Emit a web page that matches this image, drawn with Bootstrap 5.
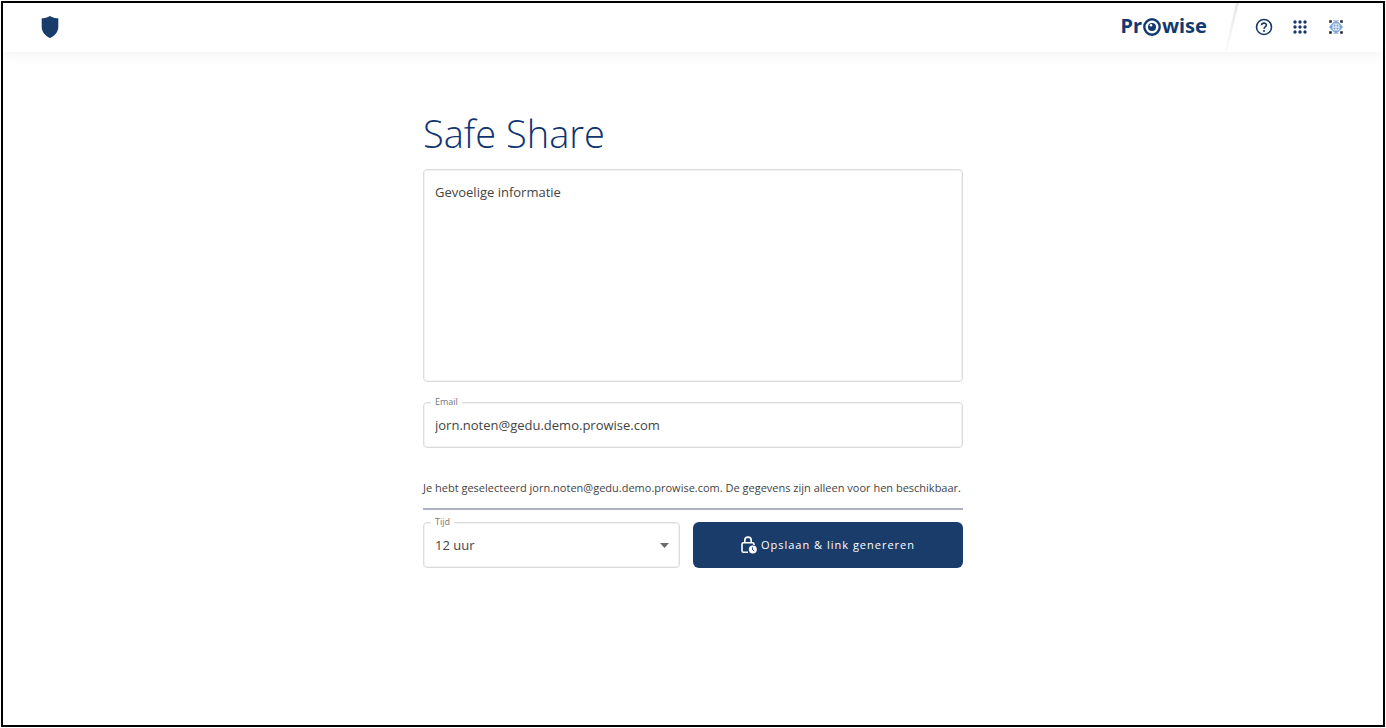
<!DOCTYPE html>
<html lang="nl">
<head>
<meta charset="utf-8">
<meta name="viewport" content="width=device-width, initial-scale=1">
<title>Safe Share</title>
<link href="https://cdn.jsdelivr.net/npm/bootstrap@5.3.0/dist/css/bootstrap.min.css" rel="stylesheet">
<style>
  :root { --navy: #1a3c6b; --ink: #444; --line: #dcdcdc; }
  body { padding: 1px; background: #fff; color: var(--ink); font-family: "Open Sans", "Noto Sans", sans-serif; font-size: 12px; line-height: 16px; }
  .frame { min-height: calc(100vh - 2px); border: 2px solid #000; }
  .topbar { height: 49px; padding: 0 38px 2px; box-shadow: 0 2px 12px rgba(0, 0, 0, .06); }
  .brand { padding-bottom: 2px; color: #123a72; font-family: "Noto Sans", sans-serif; font-size: 20px; font-weight: 700; line-height: 24px; }
  .slash { margin: 0 16px 0 18px; }
  .tool { width: 18px; height: 18px; }
  .tools { gap: 18px; }
  .sheet { max-width: 540px; padding-top: 57px; }
  h1 { margin: 0 0 12px; color: #0f3470; font-size: 38px; font-weight: 300; line-height: 48px; }
  .field .form-control, .field .form-select { border: 1px solid var(--line); outline: 1px solid #f2f2f2; outline-offset: -2px; border-radius: 4px; color: var(--ink); font-size: 13px; line-height: 20px; padding: 12px 11px; height: 46px; }
  .field textarea.form-control { height: 213px; resize: none; padding-top: 44px; }
  .field .form-select { background-image: none; }
  .inner-label { position: absolute; left: 12px; top: 13px; font-size: 13px; line-height: 20px; }
  .notch-label { position: absolute; left: 8px; top: -6px; padding: 0 4px; background: #fff; color: #757575; font-size: 9px; line-height: 12px; }
  .arrow { position: absolute; right: 11px; top: 21px; pointer-events: none; }
  .note { margin: 32px 0 12px; font-size: 11px; }
  .rule { height: 2px; margin: 0 0 12px; border: 0; background: #adb3c4; opacity: 1; }
  .pair { gap: 13px; }
  .time { flex: 257 1 0; }
  .save { flex: 270 1 0; --bs-btn-bg: #1a3c6b; --bs-btn-border-color: #1a3c6b; --bs-btn-hover-bg: #234b82; --bs-btn-padding-x: 0; --bs-btn-border-width: 0; height: 46px; border-radius: 6px; font-size: 11px; font-weight: 500; letter-spacing: 1px; gap: 4px; }
</style>
</head>
<body>
<div class="frame">
  <header class="topbar d-flex align-items-center">
    <a href="#" class="d-flex" aria-label="Home">
      <svg width="18" height="22" viewBox="0 0 18 22"><path d="M9 0C11.500 1.700 14.500 2.200 17.300 2.300V11C17.300 16 13.500 20 9 22C4.500 20 .7 16 .7 11V2.300C3.500 2.200 6.500 1.700 9 0Z" fill="#1a3c6b"/></svg>
    </a>
    <a href="#" class="brand ms-auto d-flex align-items-center text-decoration-none">Pr<svg width="20" height="20" viewBox="0 0 20 20"><circle cx="10" cy="11" r="7.700" fill="none" stroke="#123a72" stroke-width="2.400"/><circle cx="10" cy="11" r="4" fill="#123a72"/><circle cx="9" cy="9.300" r="1.300" fill="#fff"/></svg>wise</a>
    <svg class="slash" width="14" height="48" viewBox="0 0 14 48"><defs><linearGradient id="fade" x2="0" y2="1"><stop stop-color="#e6e6e6"/><stop offset="1" stop-color="#fafafa"/></linearGradient></defs><path d="M11 0H14L2 48H0Z" fill="url(#fade)"/></svg>
    <div class="tools d-flex">
      <button type="button" class="tool btn p-0 border-0 d-flex" aria-label="Help">
        <svg width="18" height="18" viewBox="0 0 18 18" fill="none" stroke="#17386b" stroke-width="1.600"><circle cx="9" cy="9" r="7.500"/><path d="M6.600 7.300C6.600 4.400 11.400 4.400 11.400 7.100C11.400 8.800 9 8.900 9 10.800"/><circle cx="9" cy="13" r="1" fill="#17386b" stroke="none"/></svg>
      </button>
      <button type="button" class="tool btn p-0 border-0 d-flex" aria-label="Apps">
        <svg width="18" height="18" viewBox="0 0 18 18" fill="#17386b"><g id="dots"><circle cx="4" cy="4" r="1.700"/><circle cx="9" cy="4" r="1.700"/><circle cx="14" cy="4" r="1.700"/></g><use href="#dots" y="5"/><use href="#dots" y="10"/></svg>
      </button>
      <button type="button" class="tool btn p-0 border-0 d-flex" aria-label="Account">
        <svg width="18" height="18" viewBox="0 0 18 18"><path d="M6.500 4.200L9 2L11.500 4.200L13.800 6.500L16 9L13.800 11.500L11.500 13.800L9 16L6.500 13.800L4.200 11.500L2 9L4.200 6.500Z" fill="#7ba3d8"/><path d="M6.500 2.500h1M10.500 2.500h1M6.500 15.500h1M10.500 15.500h1" stroke="#7ba3d8"/><rect x="5.500" y="5.500" width="7" height="7" rx="2" fill="#f2f7fd"/><path d="M6.500 6.500h2v2h-2zM9.500 6.500h2v2h-2zM6.500 9.500h2v2h-2zM9.500 9.500h2v2h-2z" fill="#7ba3d8"/><path d="M2.200 2.200h2.600v2.600H2.200zM13.200 2.200h2.600v2.600h-2.600zM2.200 13.200h2.600v2.600H2.200zM13.200 13.200h2.600v2.600h-2.600z" fill="#1c2433"/></svg>
      </button>
    </div>
  </header>

  <main class="sheet mx-auto">
    <h1>Safe Share</h1>
    <form>
      <div class="field position-relative mb-3 pb-1">
        <textarea class="form-control" id="info"></textarea>
        <label class="inner-label" for="info">Gevoelige informatie</label>
      </div>
      <div class="field position-relative">
        <input type="email" class="form-control" id="email" value="jorn.noten@gedu.demo.prowise.com">
        <label class="notch-label" for="email">Email</label>
      </div>
      <p class="note">Je hebt geselecteerd jorn.noten@gedu.demo.prowise.com. De gegevens zijn alleen voor hen beschikbaar.</p>
      <hr class="rule">
      <div class="pair d-flex">
        <div class="field time position-relative">
          <select class="form-select" id="time"><option>12 uur</option></select>
          <label class="notch-label" for="time">Tijd</label>
          <svg class="arrow" width="9" height="5" viewBox="0 0 9 5"><path d="M0 0H9L4.500 5Z" fill="#6b6b6b"/></svg>
        </div>
        <button type="submit" class="save btn btn-primary d-flex align-items-center justify-content-center">
          <svg width="16" height="18" viewBox="0 0 16 18" fill="none"><path d="M7 16.200H2.500Q1 16.200 1 14.700V8.200Q1 6.700 2.500 6.700H11.500Q13 6.700 13 8.200V9M3.800 6.500V4.300C3.800 0 10.200 0 10.200 4.300V6.500" stroke="#fff" stroke-width="1.600"/><circle cx="11.800" cy="13.500" r="4" fill="#fff"/><path d="M11.600 11.300V13.800L13.300 15" stroke="#1a3c6b"/></svg>
          <span>Opslaan &amp; link genereren</span>
        </button>
      </div>
    </form>
  </main>
</div>
<script src="https://cdn.jsdelivr.net/npm/bootstrap@5.3.0/dist/js/bootstrap.bundle.min.js"></script>
</body>
</html>
